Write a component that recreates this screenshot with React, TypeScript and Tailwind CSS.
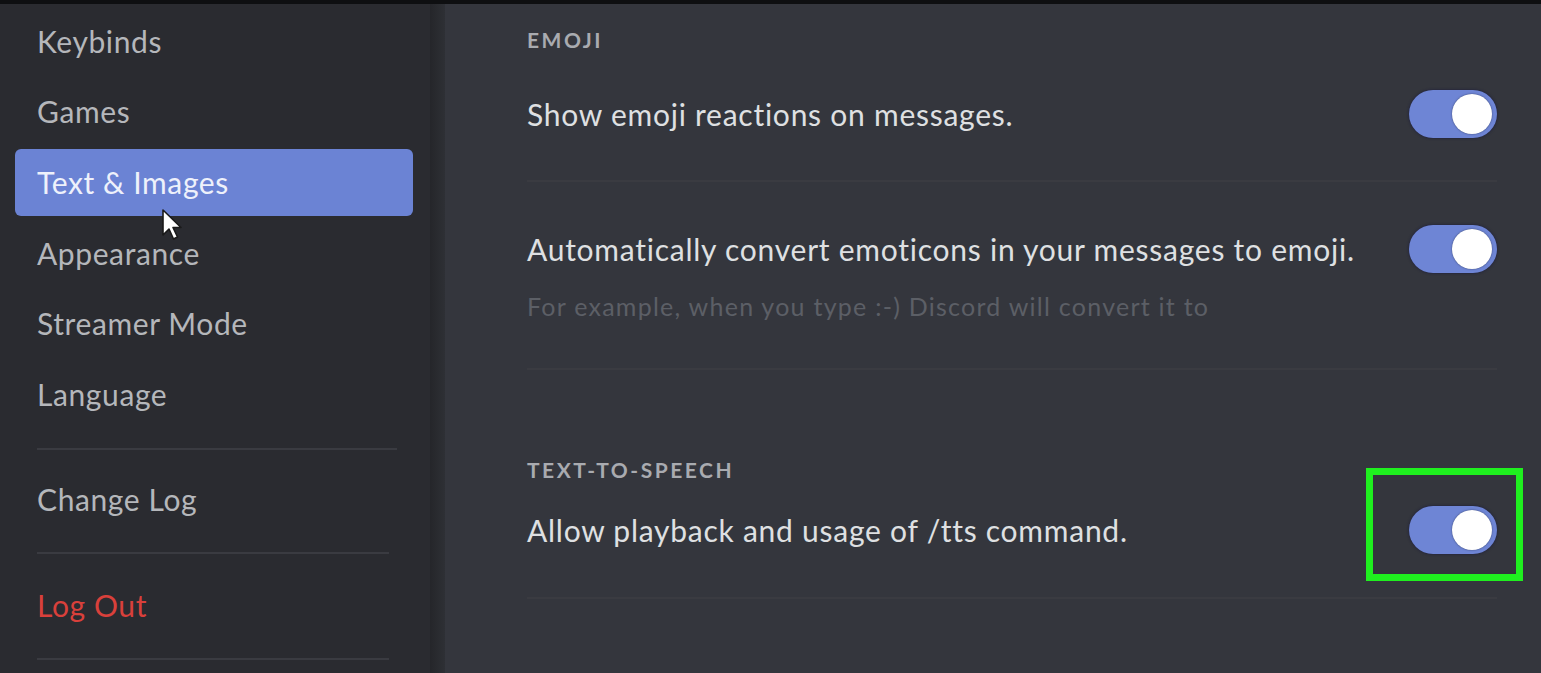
import React from "react";

const Toggle = () => (
  <div className="relative w-[88px] h-[48px] rounded-full bg-[#6e85d5] shadow-[0_0_3px_rgba(20,20,60,0.8)] shrink-0">
    <div className="absolute right-[5px] top-[4px] w-[40px] h-[40px] rounded-full bg-white shadow-[0_0_2px_rgba(0,0,0,0.5)]" />
  </div>
);

const NavItem = ({ label, selected = false, danger = false }: { label: string; selected?: boolean; danger?: boolean }) => (
  <div className="h-[70.6px] flex items-center px-[15px]">
    <div
      className={
        "w-[398px] h-[67px] flex items-center pl-[22px] rounded-[6px] text-[30px] tracking-[0.02em] " +
        (selected ? "bg-[#6b83d4] text-[#eef1fb]" : danger ? "text-[#d9403b]" : "text-[#b5b7bb]")
      }
    >
      {label}
    </div>
  </div>
);

const Divider = ({ cls }: { cls: string }) => <div className={"h-[2px] bg-[#3a3b41] " + cls} />;

export default function App() {
  return (
    <div className="w-[1541px] h-[673px] overflow-hidden bg-[#0e0f11] flex flex-col" style={{ fontFamily: "Lato, 'Open Sans', sans-serif" }}>
      <div className="h-[4px] shrink-0" />
      <div className="flex flex-1 min-h-0">
        {/* Sidebar */}
        <div className="relative w-[430px] shrink-0 bg-[#2a2b30] pt-[2px]">
          <NavItem label="Keybinds" />
          <NavItem label="Games" />
          <NavItem label="Text & Images" selected />
          <NavItem label="Appearance" />
          <NavItem label="Streamer Mode" />
          <NavItem label="Language" />
          <Divider cls="mt-[18px] ml-[37px] w-[360px]" />
          <div className="mt-[15px]">
            <NavItem label="Change Log" />
          </div>
          <Divider cls="mt-[17px] ml-[37px] w-[352px]" />
          <div className="mt-[16px]">
            <NavItem label="Log Out" danger />
          </div>
          <Divider cls="mt-[17px] ml-[37px] w-[352px]" />
          <svg className="absolute left-[160px] top-[204px]" width="30" height="36" viewBox="0 0 30 36">
            <path d="M3 2 L3 27 L9 21 L13.5 31 L17.5 29 L13 19.5 L21 19.5 Z" fill="#ffffff" stroke="#1a1a1a" strokeWidth="1.6" strokeLinejoin="round" />
          </svg>
        </div>
        <div className="w-[15px] shrink-0 bg-gradient-to-r from-[#25262a] to-[#2e3035]" />
        {/* Main */}
        <div className="flex-1 bg-[#34363d] pl-[82px] pr-[44px] pt-[24px]">
          <div className="h-[24px] text-[21px] font-bold tracking-[0.12em] text-[#a9abb0] leading-[24px]">EMOJI</div>
          <div className="mt-[38px] h-[48px] flex items-center justify-between">
            <div className="text-[30px] tracking-[0.025em] text-[#dfe0e2]">Show emoji reactions on messages.</div>
            <Toggle />
          </div>
          <Divider cls="mt-[42px]" />
          <div className="mt-[43px] h-[48px] flex items-center justify-between">
            <div className="text-[30px] tracking-[0.025em] text-[#dfe0e2]">Automatically convert emoticons in your messages to emoji.</div>
            <Toggle />
          </div>
          <div className="mt-[18px] h-[30px] leading-[30px] text-[25px] tracking-[0.05em] text-[#5c5f66]">For example, when you type :-) Discord will convert it to</div>
          <Divider cls="mt-[47px]" />
          <div className="mt-[88px] h-[24px] text-[21px] font-bold tracking-[0.12em] text-[#a9abb0] leading-[24px]">TEXT-TO-SPEECH</div>
          <div className="mt-[24px] h-[48px] flex items-center justify-between">
            <div className="text-[30px] tracking-[0.025em] text-[#dfe0e2]">Allow playback and usage of /tts command.</div>
            <div className="relative">
              <Toggle />
              <div className="absolute left-[-43px] top-[-38px] w-[157px] h-[113px] border-[7px] border-[#1ff01f]" />
            </div>
          </div>
          <Divider cls="mt-[43px]" />
        </div>
      </div>
    </div>
  );
}
